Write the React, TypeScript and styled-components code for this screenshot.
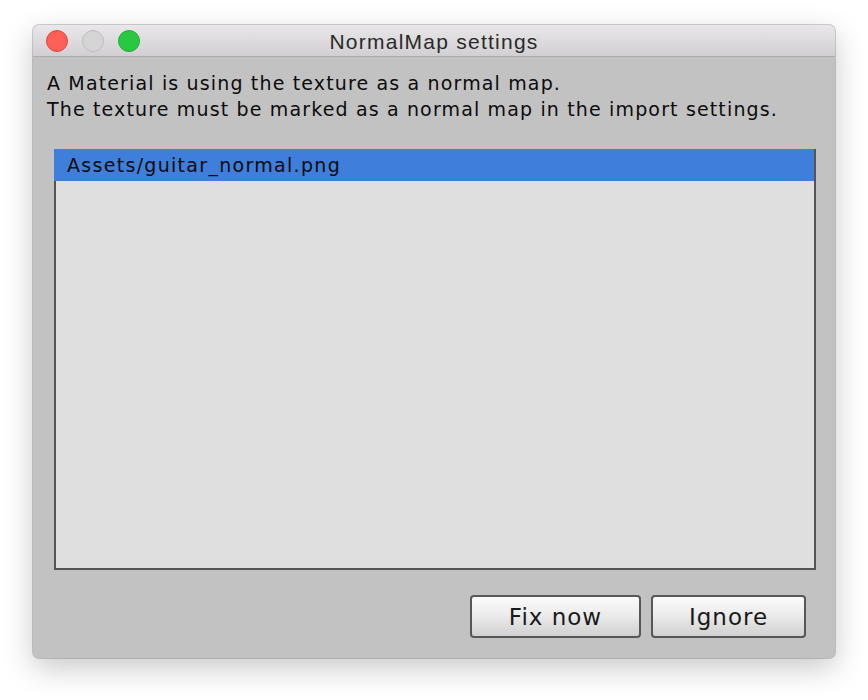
import React from "react";
import styled, { createGlobalStyle } from "styled-components";

const Global = createGlobalStyle`
  html, body { margin: 0; padding: 0; background: #ffffff; }
  body { font-family: "DejaVu Sans", "Noto Sans", sans-serif; }
`;

const Page = styled.div`
  width: 868px;
  height: 700px;
  padding: 25px 0 0 33px;
  box-sizing: border-box;
`;

const Window = styled.div`
  width: 802px;
  height: 633px;
  border-radius: 6px;
  background: #c2c2c2;
  box-shadow: 0 0 0 1px rgba(0, 0, 0, 0.18), 0 10px 30px rgba(0, 0, 0, 0.22);
  display: flex;
  flex-direction: column;
  overflow: hidden;
`;

const TitleBar = styled.div`
  height: 31px;
  flex: none;
  position: relative;
  display: flex;
  align-items: center;
  justify-content: center;
  background: linear-gradient(#e9e7e9, #d1cfd1);
  border-bottom: 1px solid #adadad;
`;

const Lights = styled.div`
  position: absolute;
  left: 13px;
  top: 5px;
  display: flex;
  gap: 14px;
`;

const Light = styled.span<{ $fill: string; $ring: string }>`
  width: 20px;
  height: 20px;
  border-radius: 50%;
  background: ${(p) => p.$fill};
  border: 1px solid ${(p) => p.$ring};
`;

const Title = styled.div`
  font-family: "Liberation Sans", "Noto Sans", sans-serif;
  font-size: 21px;
  letter-spacing: 1.25px;
  color: #2a2a2a;
  margin-top: 2px;
`;

const Body = styled.div`
  flex: 1;
  display: flex;
  flex-direction: column;
  padding: 13px 19px 0 14px;
`;

const Message = styled.p`
  margin: 0;
  font-size: 19px;
  letter-spacing: 1.15px;
  line-height: 26px;
  color: #0c0c0c;
`;

const List = styled.div`
  margin: 27px 0 0 7px;
  height: 421px;
  background: #dfdfdf;
  border: 2px solid #555555;
  border-top: none;
  box-sizing: border-box;
`;

const Row = styled.div<{ $selected?: boolean }>`
  margin-left: -2px;
  height: 32px;
  display: flex;
  align-items: center;
  padding-left: 13px;
  font-size: 19px;
  letter-spacing: 1.3px;
  color: #0c0c0c;
  background: ${(p) => (p.$selected ? "#3f7fdb" : "transparent")};
`;

const Actions = styled.div`
  display: flex;
  justify-content: flex-end;
  gap: 10px;
  margin-top: 25px;
  padding-right: 10px;
`;

const Button = styled.button<{ $w: number }>`
  box-sizing: border-box;
  width: ${(p) => p.$w}px;
  height: 43px;
  border: 2px solid #575757;
  border-radius: 4px;
  background: linear-gradient(#fbfbfb, #ececec 45%, #d2d0d2);
  font-family: "DejaVu Sans", "Noto Sans", sans-serif;
  font-size: 23px;
  letter-spacing: 1px;
  color: #1a1a1a;
  padding: 0;
  cursor: pointer;
`;

export default function App() {
  return (
    <Page>
      <Global />
      <Window>
        <TitleBar>
          <Lights>
            <Light $fill="#fe5f57" $ring="#e0443e" />
            <Light $fill="#d6d5d6" $ring="#bdbcbd" />
            <Light $fill="#28c840" $ring="#1eaa35" />
          </Lights>
          <Title>NormalMap settings</Title>
        </TitleBar>
        <Body>
          <Message>
            A Material is using the texture as a normal map.
            <br />
            The texture must be marked as a normal map in the import settings.
          </Message>
          <List>
            <Row $selected>Assets/guitar_normal.png</Row>
          </List>
          <Actions>
            <Button $w={171}>Fix now</Button>
            <Button $w={155}>Ignore</Button>
          </Actions>
        </Body>
      </Window>
    </Page>
  );
}
